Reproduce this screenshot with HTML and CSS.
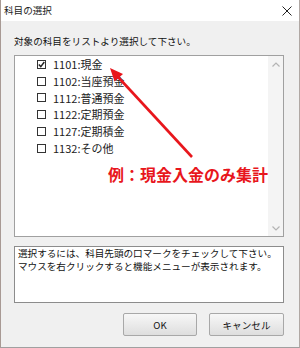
FILE: index.html
```html
<!DOCTYPE html>
<html lang="ja">
<head>
  <meta charset="utf-8" />
  <title>科目の選択</title>
  <link rel="stylesheet" href="styles.css">
</head>
<body>
<div class="dialog">
  <div class="titlebar">
    <span class="title">科目の選択</span>
    <svg class="close" width="10" height="10" viewBox="0 0 10 10">
      <path d="M0.5 0.5 L9.5 9.5 M9.5 0.5 L0.5 9.5" stroke="#222" stroke-width="1" fill="none" />
    </svg>
  </div>
  <div class="body">
    <p class="prompt">対象の科目をリストより選択して下さい。</p>
    <div class="listbox">
      <ul class="items">
        <li><span class="check"><svg width="7" height="7" viewBox="0 0 7 7"><path d="M0.8 3.4 L2.8 5.6 L6.3 1" stroke="#222" stroke-width="1.5" fill="none" /></svg></span>1101:現金</li>
        <li><span class="check"></span>1102:当座預金</li>
        <li><span class="check"></span>1112:普通預金</li>
        <li><span class="check"></span>1122:定期預金</li>
        <li><span class="check"></span>1127:定期積金</li>
        <li><span class="check"></span>1132:その他</li>
      </ul>
      <div class="scrollbar">
        <svg width="8" height="5" viewBox="0 0 8 5"><path d="M0.5 4.5 L4 1 L7.5 4.5" stroke="#b4b4b4" stroke-width="1.2" fill="none" /></svg>
        <svg width="8" height="5" viewBox="0 0 8 5"><path d="M0.5 0.5 L4 4 L7.5 0.5" stroke="#b4b4b4" stroke-width="1.2" fill="none" /></svg>
      </div>
    </div>
    <div class="help">選択するには、科目先頭の口マークをチェックして下さい。<br>マウスを右クリックすると機能メニューが表示されます。</div>
    <div class="buttons">
      <button class="btn ok">OK</button>
      <button class="btn cancel">キャンセル</button>
    </div>
  </div>

  <p class="note">例：現金入金のみ集計</p>
  <svg class="arrow" width="300" height="348" viewBox="0 0 300 348">
    <line x1="192" y1="157" x2="118.5" y2="77.5" stroke="#e8161c" stroke-width="2.6" />
    <polygon points="110,68 123,74 114.5,81.5" fill="#e8161c" />
  </svg>
</div>
</body>
</html>
```

FILE: styles.css
```css
* { margin: 0; padding: 0; box-sizing: border-box; }
body { font-family: "Noto Sans CJK JP", "Noto Sans", sans-serif; font-size: 10px; color: #111; background: #f0f0f0; }
.dialog { position: relative; width: 300px; height: 348px; background: #f0f0f0; border-left: 1px solid #a89a94; border-right: 1px solid #b0a8a4; border-bottom: 1px solid #a0a0a0; }
.titlebar { height: 21px; background: #fff; display: flex; align-items: center; justify-content: space-between; padding: 0 7px 0 3px; }
.title { font-size: 9.6px; line-height: 21px; color: #222; }
.close { display: block; margin-top: 1px; }
.body { padding: 0 15px 0 13px; }
.prompt { margin-top: 13px; height: 14px; line-height: 14px; font-size: 9.6px; }
.listbox { margin-top: 7px; height: 182px; border: 1px solid #a0a0a0; background: #fff; display: flex; }
.items { flex: 1; list-style: none; padding-left: 22px; }
.items li { height: 16.8px; line-height: 16.8px; font-size: 11px; display: flex; align-items: center; color: #222; }
.check { width: 9px; height: 9px; border: 1px solid #333; background: #fff; margin-right: 7px; display: flex; align-items: center; justify-content: center; flex: none; }
.check svg { display: block; }
.scrollbar { width: 15px; background: #f4f4f4; display: flex; flex-direction: column; justify-content: space-between; align-items: center; padding: 6px 0 5px; }
.help { margin-top: 9px; height: 57px; border: 1px solid #8c8c8c; background: #fff; padding: 0 3px; font-size: 9.6px; line-height: 13px; color: #111; white-space: nowrap; }
.buttons { margin-top: 10px; display: flex; justify-content: flex-end; gap: 12px; }
.btn { height: 23px; border: 1px solid #a8a8a8; border-radius: 2px; background: linear-gradient(#f7f7f7, #dedede); font-family: "Noto Sans CJK JP", "Noto Sans", sans-serif; font-size: 9.6px; color: #111; }
.ok { width: 74px; }
.cancel { width: 75px; }
.note { position: absolute; left: 107px; top: 164px; font-size: 16px; line-height: 20px; font-weight: bold; color: #e8161c; white-space: nowrap; }
.arrow { position: absolute; left: -1px; top: 0; pointer-events: none; }
```
